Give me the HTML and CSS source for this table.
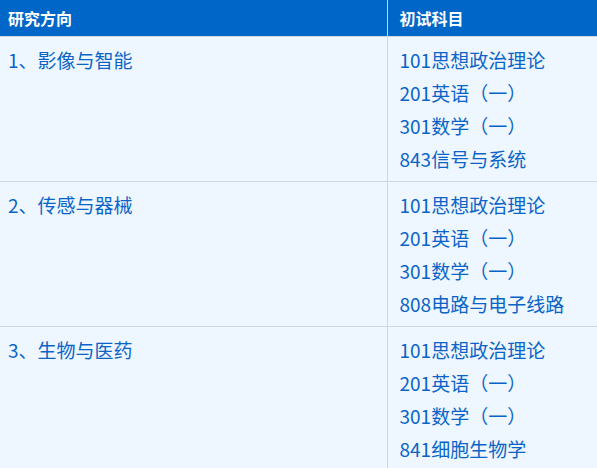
FILE: index.html
```html
<!DOCTYPE html>
<html lang="zh">
<head>
<meta charset="utf-8">
<link rel="stylesheet" href="styles.css">
</head>
<body>
<table class="exam">
  <thead>
    <tr><th class="c1">研究方向</th><th class="c2">初试科目</th></tr>
  </thead>
  <tbody>
    <tr>
      <td class="c1">1、影像与智能</td>
      <td class="c2">101思想政治理论<br>201英语（一）<br>301数学（一）<br>843信号与系统</td>
    </tr>
    <tr>
      <td class="c1">2、传感与器械</td>
      <td class="c2">101思想政治理论<br>201英语（一）<br>301数学（一）<br>808电路与电子线路</td>
    </tr>
    <tr>
      <td class="c1">3、生物与医药</td>
      <td class="c2">101思想政治理论<br>201英语（一）<br>301数学（一）<br>841细胞生物学</td>
    </tr>
  </tbody>
</table>
</body>
</html>
```
FILE: styles.css
```css
html, body {
  margin: 0;
  padding: 0;
  background: #eef7ff;
}
.exam {
  border-collapse: collapse;
  width: 100%;
  font-family: "Noto Sans CJK SC", "Noto Sans", sans-serif;
  background: #eef7ff;
}
.exam th {
  background: #0066c8;
  color: #ffffff;
  font-size: 16px;
  font-weight: bold;
  text-align: left;
  height: 36px;
  padding: 0 8px;
  box-sizing: border-box;
  border-bottom: 1px solid #cfd6dd;
  border-right: 1px solid #cfd6dd;
}
.exam td {
  color: #0a64c8;
  font-size: 19px;
  line-height: 33px;
  vertical-align: top;
  padding: 6px 8px;
  border-bottom: 1px solid #cfd6dd;
  border-right: 1px solid #cfd6dd;
}
.exam .c1 { width: 387px; box-sizing: border-box; padding-left: 8px; }
.exam .c2 { padding-left: 12px; border-right: none; }
```
